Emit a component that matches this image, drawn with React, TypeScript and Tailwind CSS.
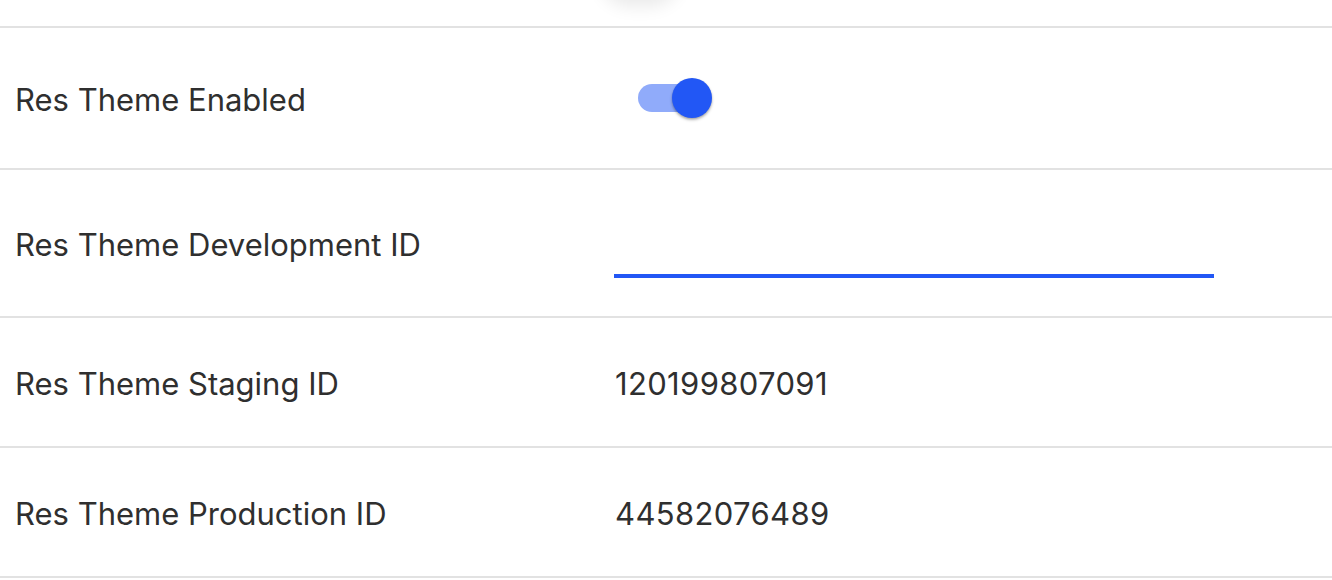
import React from 'react'

const font = { fontFamily: 'Inter, "Noto Sans", sans-serif' }

function Switch({ on }: { on: boolean }) {
  return (
    <div className="relative h-[76px] w-[116px] shrink-0">
      <div
        className={
          'absolute left-[24px] top-[24px] h-[28px] w-[68px] rounded-full ' +
          (on ? 'bg-[#90abfa]' : 'bg-[#c4c4c4]')
        }
      />
      <div
        className={
          'absolute top-[18px] h-[40px] w-[40px] rounded-full shadow-[0_2px_3px_rgba(0,0,0,0.25),0_1px_2px_rgba(0,0,0,0.15)] ' +
          (on ? 'left-[58px] bg-[#2257f5]' : 'left-[18px] bg-white')
        }
      />
    </div>
  )
}

function Row({ label, height, children }: { label: string; height: string; children?: React.ReactNode }) {
  return (
    <div className={'flex items-center border-b-2 border-[#e2e2e2] ' + height}>
      <div className="w-[614px] shrink-0 pl-[15px] pt-[5px] text-[31px] text-[#2f2f2f]">{label}</div>
      <div className="flex flex-1 items-center">{children}</div>
    </div>
  )
}

export default function App() {
  return (
    <div className="h-[580px] w-[1332px] overflow-hidden bg-white" style={font}>
      {/* previous row, scrolled mostly out of view */}
      <div className="flex h-[28px] overflow-hidden border-b-2 border-[#e2e2e2]">
        <div className="ml-[600px] -mt-[60px] shrink-0">
          <div className="h-[60px] w-[80px] rounded-full bg-white shadow-[0_6px_18px_rgba(0,0,0,0.09)]" />
        </div>
      </div>

      <Row label="Res Theme Enabled" height="h-[142px]">
        <div className="-mt-[1px]">
          <Switch on />
        </div>
      </Row>

      <Row label="Res Theme Development ID" height="h-[148px]">
        <div className="mt-[30px] w-[600px]">
          <input
            className="h-[40px] w-full border-b-4 border-[#2257f5] bg-transparent text-[31px] text-[#2f2f2f] outline-none"
            style={font}
          />
        </div>
      </Row>

      <Row label="Res Theme Staging ID" height="h-[130px]">
        <span className="pl-[1px] pt-[5px] text-[31px] tracking-[0.35px] text-[#2f2f2f]">120199807091</span>
      </Row>

      <Row label="Res Theme Production ID" height="h-[130px]">
        <span className="pl-[1px] pt-[5px] text-[31px] tracking-[0.35px] text-[#2f2f2f]">44582076489</span>
      </Row>
    </div>
  )
}
